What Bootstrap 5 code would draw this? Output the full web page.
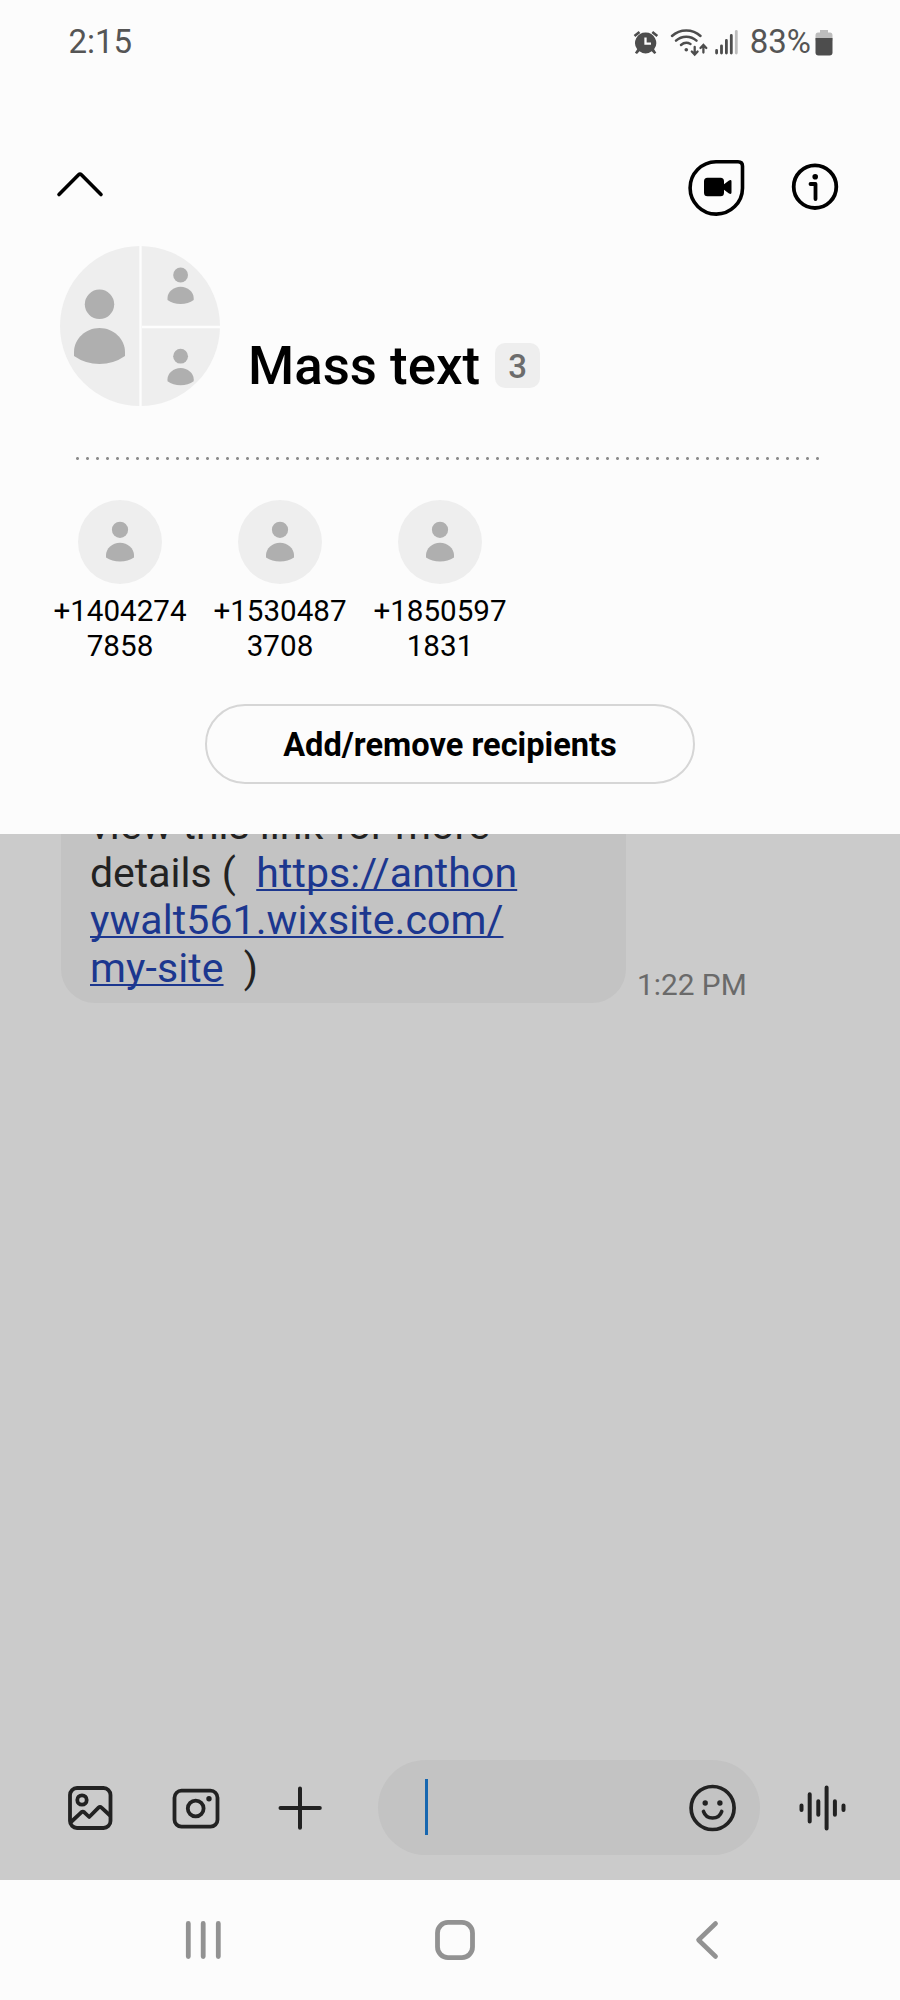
<!DOCTYPE html>
<html lang="en">
<head>
<meta charset="utf-8">
<meta name="viewport" content="width=device-width, initial-scale=1">
<title>Mass text</title>
<link href="https://cdn.jsdelivr.net/npm/bootstrap@5.3.0/dist/css/bootstrap.min.css" rel="stylesheet">
<style>
  body { font-family: Roboto, "Liberation Sans", sans-serif; background: #fcfcfc; color: #000; }
  svg { display: block; flex: none; }
  .phone { width: 900px; height: 2000px; overflow: hidden; }
  .panel { height: 834px; background: #fcfcfc; }
  .status { height: 83px; padding: 0 67px 0 68.500px; font-size: 33px; line-height: 40px; color: #555; }
  .status svg { fill: #4d4d4d; }
  .toolbar { height: 133px; padding: 75px 60px 0 55px; }
  .title-row { height: 190px; padding: 30px 0 0 60px; }
  .chat-title { font-size: 52.800px; line-height: 62px; font-weight: 500; margin: 89px 0 0 28px; white-space: nowrap; }
  .count { width: 45px; height: 45px; border-radius: 10px; background: #eee; color: #6c6c6c; font-size: 33px; font-weight: 500; line-height: 48px; text-align: center; margin: 97px 0 0 15px; }
  .dots { height: 3px; margin: 51px 80px 0 76px; background: radial-gradient(circle at 1.5px 1.5px, #8c8c8c 1.2px, transparent 1.7px) 0 0 / 10px 3px repeat-x; }
  .people { padding: 40px 0 0 40px; }
  .person { width: 160px; font-size: 29.600px; line-height: 35px; text-align: center; }
  .person svg { margin: 0 auto 10px 38px; }
  .btn-recipients { width: 490px; height: 80px; border: 2px solid #d6d6d6; border-radius: 40px; font-size: 32.600px; font-weight: 700; line-height: 40px; padding: 2px 0 0; color: #000; margin-top: 40px; }
  .thread { height: 1046px; background: #cbcbcb; }
  .messages { height: 926px; overflow: hidden; padding-left: 61px; }
  .bubble { width: 565px; height: 201px; margin-top: -32px; border-radius: 34px; background: #c3c3c3; color: #222; padding: 0 29px; font-size: 41px; line-height: 47.5px; white-space: pre; }
  .bubble a { color: #1c378f; letter-spacing: .08px; text-decoration: underline; text-decoration-thickness: 2px; text-underline-offset: 2px; text-decoration-skip-ink: none; }
  .sent { font-size: 29.800px; line-height: 36px; color: #6a6a6a; margin: 133px 0 0 11px; }
  .composer { height: 95px; padding-left: 66px; }
  .composer svg { fill: none; stroke: #222; stroke-linecap: round; stroke-linejoin: round; }
  .entry { width: 382px; height: 95px; border-radius: 47.5px; background: #c3c3c3; margin-left: 54px; padding: 0 22px 0 47px; }
  .caret { width: 3px; height: 56px; background: #1767b0; margin-top: -1px; }
  .navkeys { height: 120px; background: #fcfcfc; padding-left: 185px; }
  .navkeys svg { fill: none; stroke: #929292; stroke-linecap: round; stroke-linejoin: round; }
</style>
</head>
<body>
<main class="phone">
  <section class="panel">
    <header class="status d-flex align-items-center">
      <span>2:15</span>
      <svg class="ms-auto" width="26" height="26" viewBox="633 28 26 26" style="margin-right:11px">
        <path d="M645.600 31.500a10.500 10.500 0 0 1 8.500 16.800l2.200 3.400-2 1.300-2.600-2.700a10.500 10.500 0 0 1-12.200 0l-2.500 2.700-2.100-1.300 2.300-3.400a10.500 10.500 0 0 1 8.400-16.800z"/>
        <path d="M634.500 35l5-4M652.300 31l5 4" fill="none" stroke="#4d4d4d" stroke-width="2.600"/>
        <path d="M645.500 36.500v6.200h5.500" fill="none" stroke="#fcfcfc" stroke-width="2.300"/>
      </svg>
      <svg width="38" height="30" viewBox="669 26 38 30" style="margin-right:6px">
        <g fill="none" stroke="#4d4d4d" stroke-width="2.500" stroke-linecap="round">
          <path d="M671 35a21 21 0 0 1 28.500 0M675 39.700a15 15 0 0 1 20.500 0M680 44a8.500 8.500 0 0 1 9.500-1"/>
          <path d="M693.700 46v7M690.800 50.500l2.900 3 2.900-3M702.400 51.500v-7M699.500 47l2.900-3 2.900 3" stroke-width="2.300"/>
        </g><circle cx="685.300" cy="48.700" r="1.800"/>
      </svg>
      <svg width="24" height="26" viewBox="713 28 24 26" style="margin-right:12px">
        <g stroke="#4d4d4d" stroke-width="2.800" stroke-linecap="round"><path d="M715.600 49.500v2.500M720.500 44.800v7.200M725.400 39.500v12.500M730.300 34.500v17.500"/><path d="M735.300 30.500v21.500" stroke="#bdbdbd"/></g>
      </svg>
      <span>83%</span>
      <svg width="18" height="28" viewBox="814.500 28 18 28" style="margin:2px 0 0 4px">
        <path d="M819.500 29h8v2.500h2q2.500 0 2.500 3v5H815v-5q0-3 2.500-3h2z" fill="#bdbdbd"/>
        <path d="M815 37h17v14.500q0 3-3 3h-11q-3 0-3-3z"/>
      </svg>
    </header>

    <div class="toolbar d-flex">
      <svg width="50" height="32" viewBox="55 168 50 32" style="margin-top:10px" fill="none" stroke="#000" stroke-width="3.600" stroke-linecap="round" stroke-linejoin="round"><path d="M59 194.500 78.600 174.800q1.400-1.400 2.800 0L101 194.500"/></svg>
      <svg class="ms-auto" width="58" height="58" viewBox="687 159 58 58" style="margin:1px 45px 0 0">
        <path d="M716 161.700h22q4.500 0 4.500 4.500v22a26.200 26.200 0 1 1-26.500-26.500z" fill="none" stroke="#000" stroke-width="3.600"/>
        <path d="M707.500 177.700h13q3.500 0 3.500 3.500v3l5-3.800q2.500-1.200 2.500 1v11.200q0 2.200-2.500 1l-5-3.800v3q0 3.500-3.500 3.500h-13q-3.500 0-3.500-3.500v-11.600q0-3.500 3.500-3.500z"/>
      </svg>
      <svg width="50" height="50" viewBox="790 162 50 50" style="margin-top:4px">
        <circle cx="815" cy="186.700" r="21.300" fill="none" stroke="#000" stroke-width="3.800"/>
        <circle cx="815.200" cy="176.700" r="2.800"/>
        <path d="M810.500 184h5v15" fill="none" stroke="#000" stroke-width="3.800" stroke-linecap="round" stroke-linejoin="round"/>
      </svg>
    </div>

    <div class="title-row d-flex">
      <svg width="160" height="160" viewBox="60 246 160 160">
        <circle cx="140" cy="326" r="80" fill="#eee"/>
        <path d="M140.500 246v160M142 327h78" stroke="#fdfdfd" stroke-width="2.400"/>
        <g fill="#afafaf">
          <circle cx="99.500" cy="304.300" r="14.700"/><path d="M74 356v-4c0-13 11.500-24 25.500-24s25.500 11 25.500 24v4q-11.500 8-25.500 8T74 356z"/>
          <g id="small-face"><circle cx="180.600" cy="275" r="7.400"/><path d="M167.500 300v-2c0-6 6-11.300 13.100-11.300s13.100 5.300 13.100 11.300v2q-5.500 4-13.100 4t-13.100-4z"/></g>
          <use href="#small-face" y="81.200"/>
        </g>
      </svg>
      <h1 class="chat-title">Mass text</h1>
      <span class="count">3</span>
    </div>

    <div class="dots"></div>

    <div class="people d-flex">
      <div class="person">
        <svg width="84" height="84" viewBox="0 0 84 84"><circle cx="42" cy="42" r="42" fill="#eee"/><g id="contact" fill="#afafaf"><circle cx="42" cy="29.800" r="8.100"/><path d="M28 57.500V55c0-6.500 6.300-12.300 14-12.300S56 48.500 56 55v2.500Q50 61.500 42 61.500T28 57.500z"/></g></svg>
        +1404274<br>7858
      </div>
      <div class="person">
        <svg width="84" height="84" viewBox="0 0 84 84"><circle cx="42" cy="42" r="42" fill="#eee"/><use href="#contact"/></svg>
        +1530487<br>3708
      </div>
      <div class="person">
        <svg width="84" height="84" viewBox="0 0 84 84"><circle cx="42" cy="42" r="42" fill="#eee"/><use href="#contact"/></svg>
        +1850597<br>1831
      </div>
    </div>

    <button type="button" class="btn btn-recipients d-block mx-auto">Add/remove recipients</button>
  </section>

  <section class="thread">
    <div class="messages d-flex align-items-start">
      <div class="bubble">view this link for more
details (  <a href="#">https://anthon
ywalt561.wixsite.com/
my-site</a>  )</div>
      <time class="sent">1:22 PM</time>
    </div>
    <div class="composer d-flex align-items-center">
      <svg width="48" height="48" viewBox="66 1783.500 48 48" stroke-width="3.800">
        <rect x="70" y="1787.500" width="40.500" height="40" rx="7"/>
        <circle cx="82" cy="1799.500" r="4.700"/>
        <path d="M71 1821.500 81.300 1811.800q1.500-1.300 3 0l4.900 4.700 9.300-9.300q1.500-1.500 3 0l8 7.300"/>
      </svg>
      <svg width="52" height="48" viewBox="170 1783.500 52 48" style="margin-left:56px" stroke-width="3.800">
        <rect x="174.500" y="1790.200" width="43" height="36" rx="7"/>
        <circle cx="195.700" cy="1808" r="7.900"/><circle cx="209" cy="1798.200" r="2.700" fill="#222" stroke="none"/>
      </svg>
      <svg width="48" height="48" viewBox="276 1783.500 48 48" style="margin-left:54px" stroke-width="4"><path d="M280.500 1807.500h39.300M300 1788v39.300"/></svg>
      <div class="entry d-flex align-items-center justify-content-between">
        <span class="caret"></span>
        <svg width="50" height="50" viewBox="688 1782.500 50 50" stroke-width="3.700">
          <circle cx="712.600" cy="1807.500" r="21.500"/>
          <path d="M703.500 1811c1.500 4.500 5 6.500 9.100 6.500s7.600-2 9.100-6.500"/>
          <g fill="#222" stroke="none"><circle cx="705.200" cy="1802.500" r="2.700"/><circle cx="719.900" cy="1802.500" r="2.700"/></g>
        </svg>
      </div>
      <svg width="50" height="50" viewBox="798 1782.500 50 50" style="margin-left:38px" stroke-width="4"><path d="M801.500 1805v4.500M809.700 1793.700v27.300M818.300 1800.700v13.500M826.600 1787v41M834.900 1800.700v13.500M843.500 1805v4.500"/></svg>
    </div>
  </section>

  <nav class="navkeys d-flex align-items-center">
    <svg width="38" height="44" viewBox="185 1918 38 44" stroke-width="4.800"><path d="M188.300 1923.500v33M203.200 1923.500v33M218.300 1923.500v33"/></svg>
    <svg width="44" height="44" viewBox="433 1918 44 44" style="margin-left:210px" stroke-width="4.800"><rect x="437.500" y="1922.400" width="35" height="35.200" rx="10.500"/></svg>
    <svg width="28" height="44" viewBox="693 1918 28 44" style="margin-left:216px" stroke-width="4.600"><path d="M715.600 1923.500 698.500 1940l17.100 16.500"/></svg>
  </nav>
</main>
<script src="https://cdn.jsdelivr.net/npm/bootstrap@5.3.0/dist/js/bootstrap.bundle.min.js"></script>
</body>
</html>
